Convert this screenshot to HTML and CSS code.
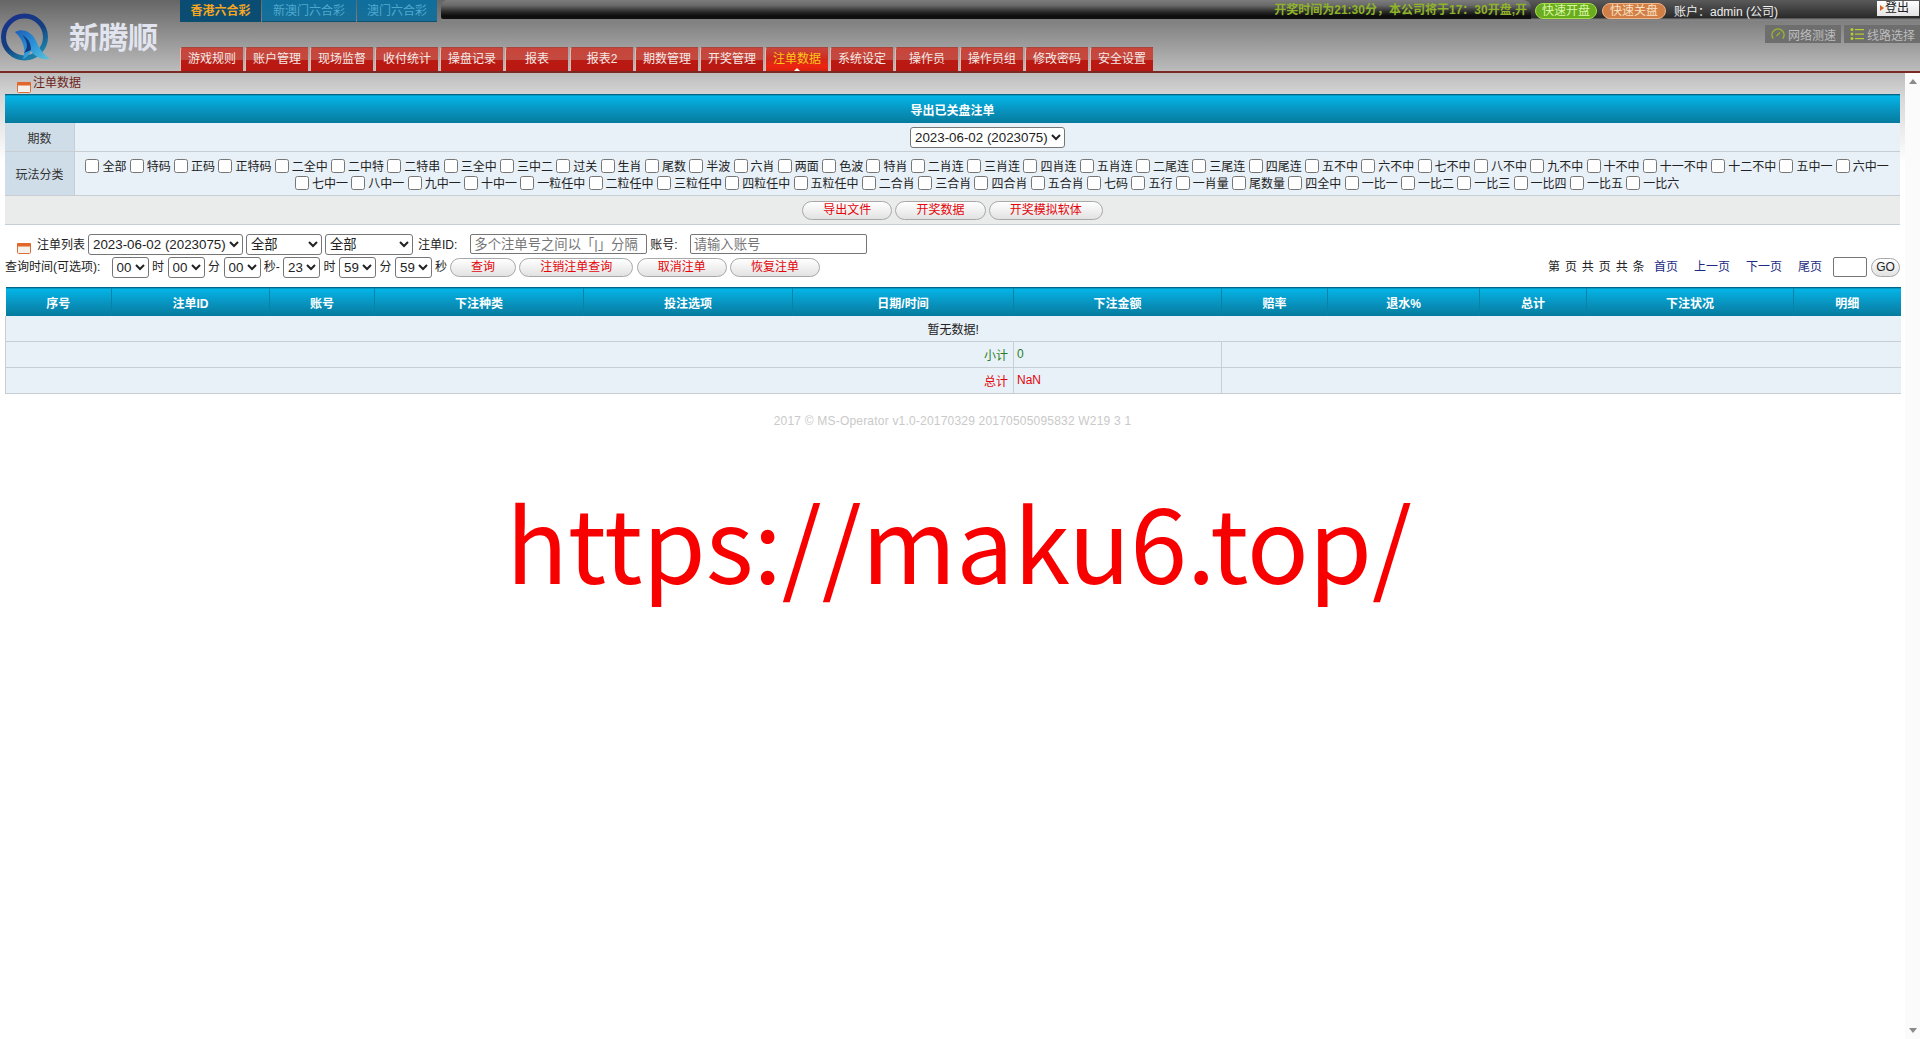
FILE: index.html
```html
<!DOCTYPE html>
<html lang="zh-CN">
<head>
  <meta charset="UTF-8">
  <title>注单数据</title>
  <link rel="stylesheet" href="styles.css">
</head>
<body>
  <!-- Header -->
  <header class="header">
    <div class="logo">
      <svg class="logo-mark" width="52" height="50" viewBox="0 0 52 50">
        <defs>
          <linearGradient id="ringFill" x1="0" y1="0" x2="0.6" y2="1">
            <stop offset="0" stop-color="#1a2f8c"/>
            <stop offset="0.6" stop-color="#14407f"/>
            <stop offset="1" stop-color="#1b7fa8"/>
          </linearGradient>
          <linearGradient id="finFill" x1="0" y1="0" x2="1" y2="1">
            <stop offset="0" stop-color="#1d5db5"/>
            <stop offset="0.5" stop-color="#2a93d8"/>
            <stop offset="1" stop-color="#5cc3d8"/>
          </linearGradient>
        </defs>
        <circle cx="24.500" cy="24" r="21" fill="none" stroke="url(#ringFill)" stroke-width="5"/>
        <path d="M15 19 C23 14 33 20 36 28 C39 35 44 42 50 46 C42 47 35 44 31 38 C29 42 26 45 23 46 C26 38 24 27 15 19 Z" fill="url(#finFill)"/>
        <path d="M24 40 C29 34 27 27 22 22 C28 25 31 30 31 37 Z" fill="#12387f"/>
      </svg>
      <span class="logo-name">新腾顺</span>
    </div>
    <div class="head-main">
      <div class="topbar">
        <div class="game-tabs">
          <a class="game-tab game-tab-on">香港六合彩</a>
          <a class="game-tab game-tab-wide">新澳门六合彩</a>
          <a class="game-tab">澳门六合彩</a>
        </div>
        <div class="strip">
          <div class="marquee"><span>开奖时间为21:30分，本公司将于17：30开盘,开</span></div>
          <a class="pill pill-green">快速开盘</a>
          <a class="pill pill-orange">快速关盘</a>
          <span class="account">账户：admin (公司)</span>
          <a class="logout">登出</a>
        </div>
      </div>
      <div class="tools">
        <a class="tool">
          <svg width="14" height="14" viewBox="0 0 14 14"><path d="M2.200 11.500 A6 6 0 1 1 11.800 11.500" fill="none" stroke="#9ab52e" stroke-width="1.500"/><path d="M5.500 9 L9 5.500" stroke="#9ab52e" stroke-width="1.200"/></svg>
          网络测速
        </a>
        <a class="tool">
          <svg width="14" height="14" viewBox="0 0 14 14"><g fill="#b4cf2e"><circle cx="2" cy="2.500" r="1.500"/><circle cx="2" cy="7" r="1.500"/><circle cx="2" cy="11.500" r="1.500"/><rect x="5" y="2" width="9" height="1.200"/><rect x="5" y="6.500" width="9" height="1.200"/><rect x="5" y="11" width="9" height="1.200"/></g></svg>
          线路选择
        </a>
      </div>
      <nav class="nav">
        <a class="nav-tab">游戏规则</a>
        <a class="nav-tab">账户管理</a>
        <a class="nav-tab">现场监督</a>
        <a class="nav-tab">收付统计</a>
        <a class="nav-tab">操盘记录</a>
        <a class="nav-tab">报表</a>
        <a class="nav-tab">报表2</a>
        <a class="nav-tab">期数管理</a>
        <a class="nav-tab">开奖管理</a>
        <a class="nav-tab nav-tab-on">注单数据</a>
        <a class="nav-tab">系统设定</a>
        <a class="nav-tab">操作员</a>
        <a class="nav-tab">操作员组</a>
        <a class="nav-tab">修改密码</a>
        <a class="nav-tab">安全设置</a>
      </nav>
    </div>
  </header>

  <div class="page">
    <main class="content">
      <!-- Breadcrumb -->
      <div class="crumb">
        <svg class="cal" width="14" height="11" viewBox="0 0 14 11"><rect x="0.500" y="0.500" width="13" height="10" rx="1" fill="#f4f0ea" stroke="#d8703a"/><rect x="0" y="0" width="14" height="3.500" rx="1" fill="#e2672a"/></svg>
        <span>注单数据</span>
      </div>

      <!-- Export form -->
      <table class="export">
        <tr><th class="bar" colspan="2">导出已关盘注单</th></tr>
        <tr class="export-row">
          <td class="export-label">期数</td>
          <td class="export-value">
            <select class="sel-date"><option>2023-06-02 (2023075)</option></select>
          </td>
        </tr>
        <tr class="export-row">
          <td class="export-label">玩法分类</td>
          <td class="export-value">
            <div class="checks">
              <label><input type="checkbox">全部</label>
              <label><input type="checkbox">特码</label>
              <label><input type="checkbox">正码</label>
              <label><input type="checkbox">正特码</label>
              <label><input type="checkbox">二全中</label>
              <label><input type="checkbox">二中特</label>
              <label><input type="checkbox">二特串</label>
              <label><input type="checkbox">三全中</label>
              <label><input type="checkbox">三中二</label>
              <label><input type="checkbox">过关</label>
              <label><input type="checkbox">生肖</label>
              <label><input type="checkbox">尾数</label>
              <label><input type="checkbox">半波</label>
              <label><input type="checkbox">六肖</label>
              <label><input type="checkbox">两面</label>
              <label><input type="checkbox">色波</label>
              <label><input type="checkbox">特肖</label>
              <label><input type="checkbox">二肖连</label>
              <label><input type="checkbox">三肖连</label>
              <label><input type="checkbox">四肖连</label>
              <label><input type="checkbox">五肖连</label>
              <label><input type="checkbox">二尾连</label>
              <label><input type="checkbox">三尾连</label>
              <label><input type="checkbox">四尾连</label>
              <label><input type="checkbox">五不中</label>
              <label><input type="checkbox">六不中</label>
              <label><input type="checkbox">七不中</label>
              <label><input type="checkbox">八不中</label>
              <label><input type="checkbox">九不中</label>
              <label><input type="checkbox">十不中</label>
              <label><input type="checkbox">十一不中</label>
              <label><input type="checkbox">十二不中</label>
              <label><input type="checkbox">五中一</label>
              <label><input type="checkbox">六中一</label>
              <label><input type="checkbox">七中一</label>
              <label><input type="checkbox">八中一</label>
              <label><input type="checkbox">九中一</label>
              <label><input type="checkbox">十中一</label>
              <label><input type="checkbox">一粒任中</label>
              <label><input type="checkbox">二粒任中</label>
              <label><input type="checkbox">三粒任中</label>
              <label><input type="checkbox">四粒任中</label>
              <label><input type="checkbox">五粒任中</label>
              <label><input type="checkbox">二合肖</label>
              <label><input type="checkbox">三合肖</label>
              <label><input type="checkbox">四合肖</label>
              <label><input type="checkbox">五合肖</label>
              <label><input type="checkbox">七码</label>
              <label><input type="checkbox">五行</label>
              <label><input type="checkbox">一肖量</label>
              <label><input type="checkbox">尾数量</label>
              <label><input type="checkbox">四全中</label>
              <label><input type="checkbox">一比一</label>
              <label><input type="checkbox">一比二</label>
              <label><input type="checkbox">一比三</label>
              <label><input type="checkbox">一比四</label>
              <label><input type="checkbox">一比五</label>
              <label><input type="checkbox">一比六</label>
            </div>
          </td>
        </tr>
        <tr>
          <td class="export-actions" colspan="2">
            <button class="btn">导出文件</button>
            <button class="btn">开奖数据</button>
            <button class="btn">开奖模拟软体</button>
          </td>
        </tr>
      </table>

      <!-- Filters -->
      <div class="filter filter-first">
        <svg class="cal" width="14" height="11" viewBox="0 0 14 11"><rect x="0.500" y="0.500" width="13" height="10" rx="1" fill="#f4f0ea" stroke="#d8703a"/><rect x="0" y="0" width="14" height="3.500" rx="1" fill="#e2672a"/></svg>
        <span class="filter-title">注单列表</span>
        <select class="sel-date"><option>2023-06-02 (2023075)</option></select>
        <select class="sel-a"><option>全部</option></select>
        <select class="sel-b"><option>全部</option></select>
        <span class="filter-id">注单ID:</span>
        <input class="txt" type="text" placeholder="多个注单号之间以「|」分隔">
        <span class="filter-acc">账号:</span>
        <input class="txt" type="text" placeholder="请输入账号">
      </div>
      <div class="filter">
        <span class="time-label">查询时间(可选项):</span>
        <select class="sel-time"><option>00</option></select><span class="unit">时</span>
        <select class="sel-time"><option>00</option></select><span class="unit">分</span>
        <select class="sel-time"><option>00</option></select><span class="unit unit-to">秒-</span>
        <select class="sel-time"><option>23</option></select><span class="unit">时</span>
        <select class="sel-time"><option>59</option></select><span class="unit">分</span>
        <select class="sel-time"><option>59</option></select><span class="unit unit-end">秒</span>
        <div class="filter-btns">
          <button class="btn">查询</button>
          <button class="btn">注销注单查询</button>
          <button class="btn">取消注单</button>
          <button class="btn">恢复注单</button>
        </div>
        <div class="pager">
          <span class="pager-info">第 页 共 页 共 条</span>
          <a>首页</a>
          <a>上一页</a>
          <a>下一页</a>
          <a>尾页</a>
          <input class="pager-input" type="text">
          <button class="btn btn-go">GO</button>
        </div>
      </div>

      <!-- List -->
      <table class="list">
        <colgroup>
          <col style="width:106px"><col style="width:158px"><col style="width:105px">
          <col style="width:209px"><col style="width:209px"><col style="width:221px">
          <col style="width:208px"><col style="width:106px"><col style="width:152px">
          <col style="width:107px"><col style="width:207px"><col style="width:107px">
        </colgroup>
        <thead>
          <tr>
            <th>序号</th><th>注单ID</th><th>账号</th><th>下注种类</th><th>投注选项</th><th>日期/时间</th>
            <th>下注金额</th><th>赔率</th><th>退水%</th><th>总计</th><th>下注状况</th><th>明细</th>
          </tr>
        </thead>
        <tbody>
          <tr><td class="empty" colspan="12">暂无数据!</td></tr>
          <tr class="sum-green"><td class="sum-label" colspan="6">小计</td><td class="sum-val">0</td><td colspan="5"></td></tr>
          <tr class="sum-red"><td class="sum-label" colspan="6">总计</td><td class="sum-val">NaN</td><td colspan="5"></td></tr>
        </tbody>
      </table>

      <p class="copy">2017 © MS-Operator v1.0-20170329 20170505095832 W219 3 1</p>
      <p class="site">https://maku6.top/</p>
    </main>
    <div class="scroll">
      <span class="arrow-up"></span>
      <span class="arrow-down"></span>
    </div>
  </div>
</body>
</html>
```

FILE: styles.css
```css
html, body {
  margin: 0;
  height: 100%;
  overflow: hidden;
}

body {
  font-family: "Liberation Sans", "Noto Sans CJK SC", sans-serif;
  font-size: 12px;
  color: #222;
  background: #fff;
  display: flex;
  flex-direction: column;
}

/* Header */
.header {
  display: flex;
  height: 71px;
  flex: none;
  background: linear-gradient(#666, #bcbcbc);
  border-bottom: 2px solid #7a2a22;
}

.logo {
  width: 180px;
  flex: none;
  display: flex;
  align-items: flex-start;
}

.logo-mark {
  margin-top: 13px;
  flex: none;
}

.logo-name {
  margin: 14px 0 0 17px;
  font-family: "Noto Sans CJK SC", sans-serif;
  font-size: 30px;
  line-height: 42px;
  font-weight: 700;
  letter-spacing: -0.500px;
  color: #e2e5f0;
}

.head-main {
  flex: 1;
  min-width: 0;
  display: flex;
  flex-direction: column;
}

.topbar {
  display: flex;
  height: 22px;
}

.game-tabs {
  display: flex;
  gap: 1px;
  margin-right: 4px;
}

.game-tab {
  width: 80px;
  box-sizing: border-box;
  line-height: 22px;
  text-align: center;
  background: linear-gradient(#0f6e9c, #176f98);
  border-bottom: 1px solid #10506f;
  color: #4fa9cf;
}

.game-tab-wide {
  width: 94px;
}

.game-tab-on {
  width: 81px;
  background: #0b4d72;
  color: #f5a623;
  font-weight: 700;
}

.strip {
  flex: 1;
  min-width: 0;
  display: flex;
  align-items: center;
  height: 21px;
  background: linear-gradient(#5a5a5a 0, #2a2a2a 85%, #777 90%, #8a8a8a 100%);
  border-radius: 6px 0 0 0;
}

.marquee {
  width: 1090px;
  height: 100%;
  flex: none;
  overflow: hidden;
  white-space: nowrap;
  text-align: right;
  padding-right: 4px;
  box-sizing: border-box;
  line-height: 21px;
  font-weight: 700;
  color: #8fb32a;
  background: linear-gradient(#7c7c7c 0, #6a6a6a 25%, #2c2c2c 55%, #0e0e0e 75%, #0e0e0e 88%, #777 91%, #8a8a8a 100%);
  border-radius: 6px 8px 0 6px;
}

.pill {
  box-sizing: border-box;
  height: 16px;
  line-height: 14px;
  padding: 0 6px;
  border-radius: 8px;
  border: 1px solid;
  white-space: nowrap;
  text-align: center;
}

.pill-green {
  margin-left: 4px;
  width: 62px;
  background: #69ad1f;
  border-color: #a5dc4e;
  color: #dcf7a4;
}

.pill-orange {
  margin-left: 5px;
  width: 64px;
  background: #d17f47;
  border-color: #f0b487;
  color: #fbe0c2;
}

.account {
  margin-left: 8px;
  color: #eee;
}

.logout {
  margin-left: auto;
  margin-right: 1px;
  align-self: flex-start;
  margin-top: 1px;
  width: 42px;
  box-sizing: border-box;
  height: 15px;
  line-height: 15px;
  padding-left: 8px;
  color: #222;
  background: linear-gradient(#fff, #e4e4e4);
  position: relative;
}

.logout::before {
  content: "";
  position: absolute;
  left: 3px;
  top: 4px;
  border-left: 4px solid #d8642a;
  border-top: 3px solid transparent;
  border-bottom: 3px solid transparent;
}

.tools {
  display: flex;
  justify-content: flex-end;
  gap: 3px;
  margin-top: 3px;
  height: 18px;
}

.tool {
  display: flex;
  align-items: center;
  gap: 3px;
  width: 76px;
  box-sizing: border-box;
  padding-left: 6px;
  background: #6e6e6e;
  color: #bdbdbd;
}

.nav {
  display: flex;
  gap: 2px;
  margin-top: auto;
}

.nav-tab {
  width: 63px;
  height: 24px;
  box-sizing: border-box;
  line-height: 23px;
  text-align: center;
  color: #f5e9e6;
  background: linear-gradient(#c9443a 0, #c24a40 50%, #bb1a13 52%, #b91812 100%);
  border-left: 1px solid #e4b6ae;
  border-top: 1px solid #a8443a;
  border-radius: 3px 0 0 0;
  position: relative;
}

.nav-tab-on {
  color: #ffc61a;
  background: linear-gradient(#c9443a 0, #d2291c 50%, #ee2410 80%, #d8200f 100%);
}

.nav-tab-on::after {
  content: "";
  position: absolute;
  left: 0;
  right: 0;
  bottom: 0;
  margin: 0 auto;
  width: 0;
  border-left: 3px solid transparent;
  border-right: 3px solid transparent;
  border-bottom: 3px solid #fff;
}

/* Page */
.page {
  flex: 1;
  min-height: 0;
  display: flex;
}

.content {
  flex: 1;
  min-width: 0;
  padding: 0 5px;
  background: linear-gradient(#bdbdbd 0, #d8d8d8 25px, #fff 90px) no-repeat;
}

.scroll {
  width: 15px;
  flex: none;
  background: #fbfbfb;
  display: flex;
  flex-direction: column;
  justify-content: space-between;
  align-items: center;
  padding: 6px 0;
  box-sizing: border-box;
}

.arrow-up,
.arrow-down {
  width: 0;
  border-left: 4px solid transparent;
  border-right: 4px solid transparent;
}

.arrow-up {
  border-bottom: 5px solid #8a8a8a;
}

.arrow-down {
  border-top: 5px solid #8a8a8a;
}

.crumb {
  height: 21px;
  display: flex;
  padding-left: 12px;
  color: #6e1f1a;
}

.crumb span {
  margin: 3px 0 0 2px;
  line-height: 14px;
}

.crumb .cal {
  margin-top: 9px;
}

.cal {
  flex: none;
}

/* Tables */
table {
  width: 100%;
  border-collapse: collapse;
}

.bar {
  height: 28px;
  padding: 0;
  color: #fff;
  font-weight: 700;
  background: linear-gradient(#03b6e8, #0892bd 55%, #057a9c);
  border-top: 1px solid #00668a;
}

.export-row td {
  border-bottom: 1px solid #c7ced4;
}

.export-label {
  width: 69px;
  padding: 0;
  text-align: center;
  color: #333;
  background: #cfdde9;
  border-right: 1px solid #c7ced4;
}

.export-value {
  padding: 0;
  background: #e9f1f8;
  text-align: center;
}

.export-row:nth-child(2) td {
  height: 28px;
}

.checks {
  display: flex;
  flex-wrap: wrap;
  justify-content: center;
  padding: 5px 4px 4px 0;
}

.checks label {
  display: flex;
  align-items: center;
  height: 17px;
  white-space: nowrap;
}

.checks input {
  width: 14px;
  height: 14px;
  margin: 0 3px 0 3.300px;
}

.export-actions {
  height: 28px;
  padding: 0;
  text-align: center;
  background: #eaecec;
  border-bottom: 1px solid #c7ced4;
}

/* Controls */
select {
  height: 21px;
  font-family: "Liberation Sans", "Noto Sans CJK SC", sans-serif;
  font-size: 13.330px;
  padding: 0;
  background: #fff;
  color: #222;
  border: 1px solid #767676;
  border-radius: 3px;
}

.sel-date {
  width: 155px;
}

.sel-a {
  width: 76px;
}

.sel-b {
  width: 88px;
}

.sel-time {
  width: 37px;
}

.btn {
  height: 19px;
  padding: 0 20px;
  font-family: "Liberation Sans", "Noto Sans CJK SC", sans-serif;
  font-size: 12px;
  line-height: 16px;
  color: #e3050a;
  background: linear-gradient(#fff, #e2e2e2);
  border: 1px solid #a8a8a8;
  border-radius: 10px;
}

.btn-go {
  width: 29px;
  padding: 0;
  color: #222;
}

.txt {
  height: 20px;
  box-sizing: border-box;
  width: 177px;
  padding: 0 3px;
  font-family: "Liberation Sans", "Noto Sans CJK SC", sans-serif;
  font-size: 13.330px;
  border: 1px solid #767676;
  border-radius: 2px;
}

.filter {
  display: flex;
  align-items: center;
  height: 20px;
  margin-top: 3px;
}

.filter-first {
  margin-top: 9px;
  padding-left: 12px;
  gap: 3px;
}

.filter-first .cal {
  margin: 9px 3px 0 0;
}

.filter-first span {
  margin-bottom: 2px;
}

.filter-id {
  margin: 0 10px 2px 2px;
}

.filter-acc {
  margin-right: 9px;
}

.time-label {
  width: 106.500px;
  flex: none;
  margin-bottom: 4px;
}

.unit {
  width: 19px;
  text-align: center;
  flex: none;
  margin-bottom: 4px;
}

.unit-to {
  width: 22.500px;
}

.unit-end {
  width: 18px;
}

.filter-btns {
  display: flex;
  gap: 3.300px;
}

.pager {
  margin-left: auto;
  display: flex;
  align-items: center;
  gap: 16px;
}

.pager-info {
  word-spacing: 1px;
  margin: 0 -7px 4px 0;
  letter-spacing: 0.300px;
}

.pager a {
  color: #1c2a80;
  margin-bottom: 4px;
}

.pager-input {
  width: 34px;
  height: 20px;
  box-sizing: border-box;
  margin: 0 -12px 0 -5px;
  border: 1px solid #767676;
  border-radius: 2px;
}

.list {
  table-layout: fixed;
  margin-top: 10px;
}

.list th {
  height: 28px;
  padding: 0;
  color: #fff;
  font-weight: 700;
  background: linear-gradient(#03b6e8, #0892bd 55%, #057a9c);
  border-top: 1px solid #00668a;
  border-left: 1px solid #0783aa;
}

.list th:first-child {
  border-left: 0;
}

.list td {
  padding: 0;
  background: #e9f1f8;
  border-bottom: 1px solid #c7ced4;
  border-left: 1px solid #c7ced4;
}

.list tbody tr:first-child td {
  height: 25px;
}

.list tbody tr + tr td {
  height: 25px;
}

.list .empty {
  text-align: center;
}

.sum-label {
  text-align: right;
  padding-right: 5px !important;
}

.sum-val {
  padding-left: 3px !important;
  vertical-align: top;
  line-height: 24px;
}

.sum-green td {
  color: #2b7d1f;
}

.sum-red td {
  color: #e3050a;
}

.copy {
  margin: 20px 0 0;
  line-height: 14px;
  text-align: center;
  letter-spacing: 0.200px;
  color: #c9c9c9;
}

.site {
  margin: 47px 0 0;
  padding-left: 13px;
  text-align: center;
  font-family: "Noto Sans CJK SC", sans-serif;
  font-size: 102px;
  line-height: 130px;
  color: #f80000;
}
```
